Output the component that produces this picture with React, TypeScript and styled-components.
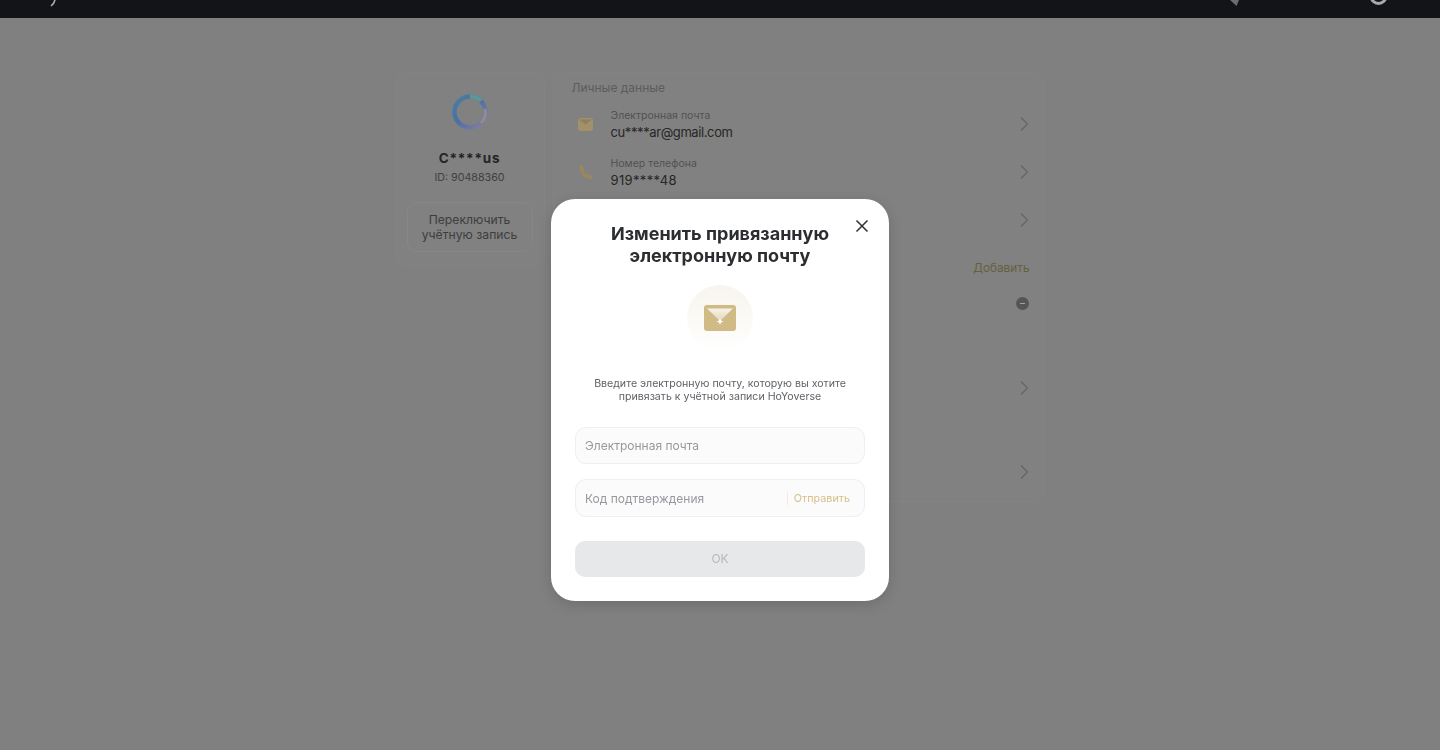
import React from 'react'
import styled, { createGlobalStyle } from 'styled-components'

const GlobalStyle = createGlobalStyle`
  html, body {
    margin: 0;
    height: 100%;
    background: #808080;
    font-family: Inter, "Liberation Sans", sans-serif;
    overflow: hidden;
  }
  * { box-sizing: border-box; }
`

const Header = styled.header`
  height: 18px;
  background: #131417;
  display: flex;
  align-items: flex-start;
  padding: 0 52px 0 44px;
  overflow: hidden;
`

const HeaderSpacer = styled.div`
  flex: 1;
`

const HeaderIcons = styled.div`
  display: flex;
  gap: 130px;
`

const Main = styled.main`
  display: flex;
  justify-content: center;
  align-items: flex-start;
  gap: 8px;
  padding: 54px 1px 0 0;
`

const Card = styled.section`
  background: #818181;
  border: 1px solid #838383;
  border-radius: 10px;
`

const ProfileCard = styled(Card)`
  width: 150px;
  height: 194px;
  padding: 19px 11px 0;
  display: flex;
  flex-direction: column;
  align-items: center;
`

const Avatar = styled.svg`
  width: 40px;
  height: 40px;
  display: block;
`

const Name = styled.div`
  margin-top: 18px;
  font-size: 13.5px;
  line-height: 16px;
  font-weight: 700;
  letter-spacing: 0.8px;
  color: #242424;
`

const UserId = styled.div`
  margin-top: 5px;
  font-size: 10.7px;
  line-height: 14px;
  color: #3f3f3f;
`

const SwitchButton = styled.button`
  margin-top: 17px;
  width: 126px;
  height: 50px;
  background: transparent;
  border: 1px solid #878787;
  border-radius: 10px;
  padding: 0;
  font: inherit;
  font-size: 12.2px;
  line-height: 15px;
  color: #3d3d3d;
`

const DetailsCard = styled(Card)`
  width: 492px;
  height: 430px;
  padding: 2px 14px 0 18px;
`

const SectionTitle = styled.div<{ $height: number }>`
  height: ${p => p.$height}px;
  display: flex;
  align-items: center;
  justify-content: space-between;
  font-size: 12px;
  color: #5c5c5c;
`

const AddLink = styled.span`
  font-size: 11.8px;
  color: #66603f;
`

const Row = styled.div`
  height: 48px;
  display: flex;
  align-items: center;
  gap: 11px;
`

const RowIcon = styled.div`
  width: 28px;
  height: 28px;
  display: flex;
  align-items: center;
  justify-content: center;
  flex-shrink: 0;
`

const RowText = styled.div`
  flex: 1;
  min-width: 0;
  padding-top: 1px;
`

const RowLabel = styled.div`
  font-size: 10.5px;
  line-height: 14px;
  color: #515151;
`

const RowValue = styled.div<{ $spacing: number }>`
  margin-top: 1px;
  font-size: 13px;
  line-height: 16px;
  letter-spacing: ${p => p.$spacing}px;
  color: #262626;
`

const Chevron = styled.svg`
  width: 12px;
  height: 16px;
  flex-shrink: 0;
`

const RemoveRow = styled(Row)`
  align-items: flex-start;
  justify-content: flex-end;
  padding: 6px 1px 0 0;
`

const RemoveBadge = styled.span`
  width: 13px;
  height: 13px;
  border-radius: 50%;
  background: #555558;
  display: flex;
  align-items: center;
  justify-content: center;

  &::after {
    content: '';
    width: 5px;
    height: 1.5px;
    background: #a2a2a2;
  }
`

const Backdrop = styled.div`
  position: fixed;
  inset: 0;
  display: flex;
  justify-content: center;
  padding-top: 199px;
`

const Modal = styled.div`
  position: relative;
  width: 338px;
  height: 402px;
  background: #fff;
  border-radius: 24px;
  padding: 24px 24px 0;
  box-shadow: 0 4px 14px rgba(0, 0, 0, 0.14);
  display: flex;
  flex-direction: column;
  align-items: center;
`

const CloseButton = styled.button`
  position: absolute;
  top: 19px;
  right: 19px;
  width: 16px;
  height: 16px;
  padding: 0;
  border: 0;
  background: none;
  display: flex;
`

const Title = styled.h2`
  margin: 0;
  font-size: 18px;
  line-height: 22px;
  font-weight: 700;
  text-align: center;
  color: #2b2d30;
`

const IconCircle = styled.div`
  margin-top: 18px;
  width: 66px;
  height: 66px;
  border-radius: 50%;
  background: linear-gradient(180deg, #f8f5ee 0%, #fbfaf6 55%, #ffffff 100%);
  display: flex;
  align-items: center;
  justify-content: center;
`

const Hint = styled.p`
  margin: 26px 0 0;
  font-size: 10.6px;
  line-height: 13px;
  text-align: center;
  color: #5f6266;
`

const Field = styled.div<{ $height: number }>`
  width: 290px;
  height: ${p => p.$height}px;
  background: #fbfbfc;
  border: 1px solid #eeeff1;
  border-radius: 11px;
  padding: 0 14px 0 9px;
  display: flex;
  align-items: center;
  font-size: 12px;
  color: #96989d;
`

const FieldGroup = styled.div`
  margin-top: 24px;
  display: flex;
  flex-direction: column;
  gap: 15px;
`

const Placeholder = styled.span`
  flex: 1;
`

const SendCode = styled.span`
  border-left: 1px solid #f1ecdd;
  padding-left: 6px;
  font-size: 10.8px;
  line-height: 13px;
  color: #d6c08c;
`

const SubmitButton = styled.button`
  margin-top: 24px;
  width: 290px;
  height: 36px;
  border: 0;
  border-radius: 10px;
  background: #e7e8ea;
  padding: 0 0 2px;
  font: inherit;
  font-size: 12px;
  color: #b6b8bc;
`

const MailIcon = () => (
  <svg width="15" height="13" viewBox="0 0 15 13">
    <rect width="15" height="13" rx="2.5" fill="#a1906a" />
    <path d="M1 1.5h13L7.5 6.500z" fill="#8c8060" />
  </svg>
)

const PhoneIcon = () => (
  <svg width="15" height="15" viewBox="0 0 15 15">
    <path d="M3.500 3C3.500 8 7 11.500 12 11.500" fill="none" stroke="#98875f" strokeWidth="3.800" strokeLinecap="round" />
    <path d="M3 1.500 4.500 5M9.500 11.500l3.500 1" fill="none" stroke="#98875f" strokeWidth="3.400" strokeLinecap="round" />
  </svg>
)

const ChevronIcon = () => (
  <Chevron viewBox="0 0 12 16">
    <path d="M3 1.500 9.500 8 3 14.500" fill="none" stroke="#666666" strokeWidth="1.300" />
  </Chevron>
)

const rowsBeforeAdd = [
  { label: 'Электронная почта', value: 'cu****ar@gmail.com', spacing: -0.4, icon: <MailIcon /> },
  { label: 'Номер телефона', value: '919****48', spacing: 0.35, icon: <PhoneIcon /> },
  { label: '', value: '', spacing: 0, icon: null },
]

const App: React.FC = () => (
  <>
    <GlobalStyle />
    <Header>
      <svg width="14" height="18" viewBox="0 0 14 18">
        <path d="M11 0C10.500 2 9.500 4 7 6" fill="none" stroke="#b5b5b5" strokeWidth="1.500" />
      </svg>
      <HeaderSpacer />
      <HeaderIcons>
        <svg width="12" height="18" viewBox="0 0 12 18">
          <path d="M3 0h9L9.500 6z" fill="#6c6d71" />
        </svg>
        <svg width="19" height="18" viewBox="0 0 19 18">
          <circle cx="9.500" cy="-4" r="7.500" fill="none" stroke="#a9a9a9" strokeWidth="3" />
        </svg>
      </HeaderIcons>
    </Header>

    <Main>
      <ProfileCard>
        <Avatar viewBox="0 0 40 40">
          <defs>
            <linearGradient id="ring" x1="0" y1="0" x2="1" y2="1">
              <stop offset="0" stopColor="#4a7f9c" />
              <stop offset="0.45" stopColor="#4c6fa6" />
              <stop offset="1" stopColor="#8a7fa0" />
            </linearGradient>
          </defs>
          <circle cx="20" cy="20" r="15.500" fill="none" stroke="url(#ring)" strokeWidth="4.500" />
          <path d="M20 4.500a15.500 15.500 0 0 1 11 4.500" fill="none" stroke="#5d9694" strokeWidth="4.500" />
          <path d="M35 17a15.500 15.500 0 0 1-4 14" fill="none" stroke="#8f8c93" strokeWidth="3" />
        </Avatar>
        <Name>C****us</Name>
        <UserId>ID: 90488360</UserId>
        <SwitchButton>
          Переключить
          <br />
          учётную запись
        </SwitchButton>
      </ProfileCard>

      <DetailsCard>
        <SectionTitle $height={25}>Личные данные</SectionTitle>
        {rowsBeforeAdd.map((row, i) => (
          <Row key={i}>
            <RowIcon>{row.icon}</RowIcon>
            <RowText>
              <RowLabel>{row.label}</RowLabel>
              <RowValue $spacing={row.spacing}>{row.value}</RowValue>
            </RowText>
            <ChevronIcon />
          </Row>
        ))}
        <SectionTitle $height={47}>
          <span />
          <AddLink>Добавить</AddLink>
        </SectionTitle>
        <RemoveRow>
          <RemoveBadge />
        </RemoveRow>
        <SectionTitle $height={25} />
        <Row>
          <RowText />
          <ChevronIcon />
        </Row>
        <SectionTitle $height={36} />
        <Row>
          <RowText />
          <ChevronIcon />
        </Row>
      </DetailsCard>
    </Main>

    <Backdrop>
      <Modal>
        <CloseButton aria-label="Закрыть">
          <svg width="16" height="16" viewBox="0 0 16 16">
            <path d="M2.500 2.500l11 11M13.500 2.500l-11 11" stroke="#2f3033" strokeWidth="1.500" fill="none" />
          </svg>
        </CloseButton>
        <Title>
          Изменить привязанную
          <br />
          электронную почту
        </Title>
        <IconCircle>
          <svg width="32" height="26" viewBox="0 0 32 26">
            <defs>
              <linearGradient id="flap" x1="0" y1="0" x2="0" y2="1">
                <stop offset="0" stopColor="#f6f2e8" />
                <stop offset="1" stopColor="#e3d8bc" />
              </linearGradient>
            </defs>
            <rect width="32" height="26" rx="3" fill="#d0ba85" />
            <path d="M3 3.500h26L16 16z" fill="url(#flap)" />
            <path d="M16 13.500l1.300 2.200 2.200.8-2.200.8L16 19.500l-1.300-2.200-2.200-.8 2.200-.8z" fill="#fff" />
          </svg>
        </IconCircle>
        <Hint>
          Введите электронную почту, которую вы хотите
          <br />
          привязать к учётной записи HoYoverse
        </Hint>
        <FieldGroup>
          <Field $height={37}>
            <Placeholder>Электронная почта</Placeholder>
          </Field>
          <Field $height={38}>
            <Placeholder>Код подтверждения</Placeholder>
            <SendCode>Отправить</SendCode>
          </Field>
        </FieldGroup>
        <SubmitButton>OK</SubmitButton>
      </Modal>
    </Backdrop>
  </>
)

export default App
